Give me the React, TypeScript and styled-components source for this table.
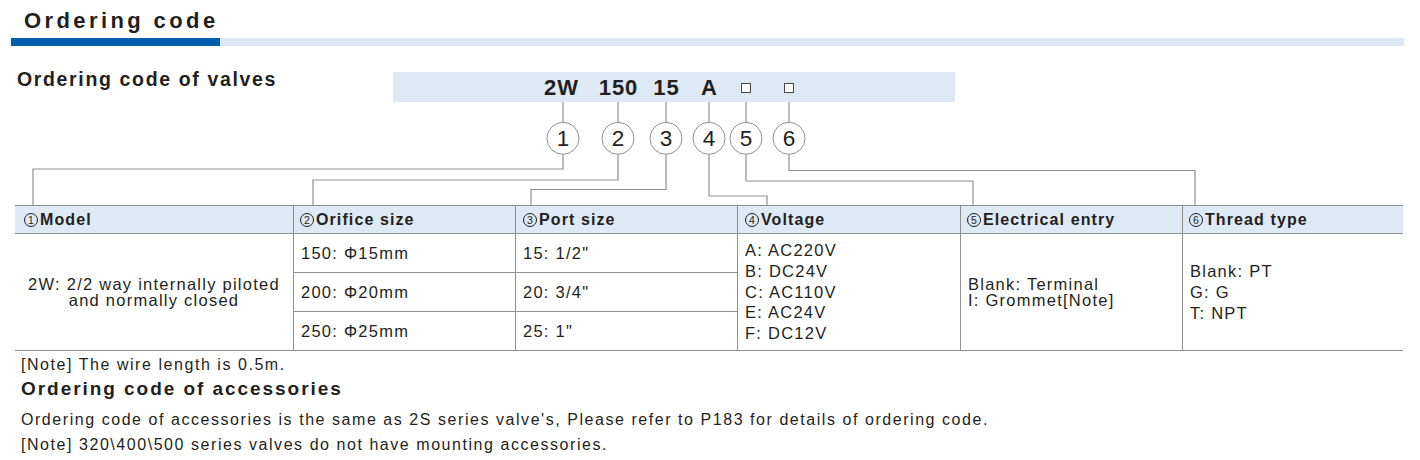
import React from "react";
import styled, { createGlobalStyle } from "styled-components";

const GlobalStyle = createGlobalStyle`
  html, body { margin: 0; padding: 0; background: #ffffff; }
  body {
    font-family: "Liberation Sans", Arial, "DejaVu Sans", sans-serif;
    color: #231f20;
  }
`;

const INK = "#231f20";
const LINE = "#8f8f8f";
const PALE = "#dfe9f4";
const BLUE = "#005dae";

const Page = styled.div`
  width: 1420px;
  height: 460px;
  overflow: hidden;
`;

const TitleText = styled.h1`
  margin: 0;
  padding: 11px 0 0 24px;
  font-size: 22px;
  line-height: 20px;
  font-weight: 700;
  letter-spacing: 3.4px;
`;

const TitleBar = styled.div`
  margin: 7px 0 0 11px;
  width: 1393px;
  height: 8px;
  background: linear-gradient(to right, ${BLUE} 0 209px, ${PALE} 209px 100%);
`;

const CodeRow = styled.div`
  display: flex;
  align-items: flex-start;
  margin-top: 23px;
`;

const SubHeading = styled.h2`
  margin: 0;
  width: 376px;
  padding-left: 17px;
  font-size: 19.5px;
  line-height: 20px;
  font-weight: 700;
  letter-spacing: 1.65px;
`;

const CodeBox = styled.div`
  margin-top: 3px;
  width: 562px;
  height: 30px;
  padding: 2px 0 0 140px;
  box-sizing: border-box;
  background: ${PALE};
  display: grid;
  grid-template-columns: 56px 58px 38px 48px 26px 60px;
  align-items: center;
`;

const Token = styled.span`
  justify-self: center;
  font-size: 22px;
  line-height: 28px;
  font-weight: 700;
  letter-spacing: 1px;
  margin-right: -1px;
`;

const Blank = styled.span`
  justify-self: center;
  width: 8px;
  height: 8px;
  border: 1px solid #4a4a4a;
  background: #fff;
`;

const Diagram = styled.svg`
  display: block;
  width: 1420px;
  height: 103px;
`;

const Table = styled.div`
  margin-left: 15px;
  width: 1388px;
  border-top: 1px solid ${LINE};
  display: grid;
  grid-template-columns: 279px 222px 222px 223px 222px 220px;
  grid-template-rows: 28px 39px 39px 39px;
`;

const HeadCell = styled.div<{ $pad: number; $last?: boolean }>`
  box-sizing: border-box;
  background: ${PALE};
  border-bottom: 1px solid ${LINE};
  border-right: ${(p) => (p.$last ? "none" : `1px solid ${LINE}`)};
  padding-left: ${(p) => p.$pad}px;
  display: flex;
  align-items: center;
  font-size: 16px;
  font-weight: 700;
  letter-spacing: 1.1px;
  white-space: nowrap;
`;

const Num = styled.span`
  display: inline-flex;
  align-items: center;
  justify-content: center;
  box-sizing: border-box;
  width: 14px;
  height: 14px;
  margin: 1px 2px 0 0;
  border: 1px solid ${INK};
  border-radius: 50%;
  font-size: 10.5px;
  line-height: 1;
  font-weight: 400;
  letter-spacing: 0;
`;

const Cell = styled.div<{ $span?: boolean; $last?: boolean; $center?: boolean; $lh?: number }>`
  box-sizing: border-box;
  grid-row: ${(p) => (p.$span ? "2 / span 3" : "auto")};
  border-bottom: 1px solid ${LINE};
  border-right: ${(p) => (p.$last ? "none" : `1px solid ${LINE}`)};
  padding-left: ${(p) => (p.$center ? 0 : 7)}px;
  display: flex;
  flex-direction: column;
  justify-content: center;
  align-items: ${(p) => (p.$center ? "center" : "flex-start")};
  text-align: ${(p) => (p.$center ? "center" : "left")};
  font-size: 16.5px;
  line-height: ${(p) => p.$lh ?? 18}px;
  letter-spacing: 1.25px;
  white-space: nowrap;
`;

const Notes = styled.div`
  padding-left: 21px;
`;

const NoteLine = styled.p<{ $lh: number; $mt?: number }>`
  margin: ${(p) => p.$mt ?? 0}px 0 0 0;
  font-size: 16px;
  line-height: ${(p) => p.$lh}px;
  letter-spacing: 1.55px;
  white-space: nowrap;
`;

const NoteHeading = styled.h3`
  margin: 0;
  font-size: 19px;
  line-height: 19px;
  font-weight: 700;
  letter-spacing: 1.95px;
`;

const connectors = [
  { n: "1", x: 563, y: 67, tx: 33 },
  { n: "2", x: 618, y: 78, tx: 313 },
  { n: "3", x: 666, y: 87.5, tx: 531 },
  { n: "4", x: 709, y: 94, tx: 767 },
  { n: "5", x: 746, y: 79, tx: 973 },
  { n: "6", x: 789, y: 68.5, tx: 1195 },
];

export default function App() {
  return (
    <Page>
      <GlobalStyle />
      <TitleText>Ordering code</TitleText>
      <TitleBar />
      <CodeRow>
        <SubHeading>Ordering code of valves</SubHeading>
        <CodeBox>
          <Token>2W</Token>
          <Token>150</Token>
          <Token>15</Token>
          <Token>A</Token>
          <Blank />
          <Blank />
        </CodeBox>
      </CodeRow>
      <Diagram viewBox="0 0 1420 103">
        {connectors.map((c) => (
          <g key={c.n} fill="none" stroke={LINE} strokeWidth={1.2}>
            <line x1={c.x} y1={0} x2={c.x} y2={20.3} />
            <polyline points={`${c.x},52.3 ${c.x},${c.y} ${c.tx},${c.y} ${c.tx},103`} />
            <circle cx={c.x} cy={36.3} r={16} fill="#fff" strokeWidth={1} />
            <text
              x={c.x}
              y={44.3}
              textAnchor="middle"
              fill={INK}
              stroke="none"
              fontSize={22.5}
              fontFamily="Liberation Sans, Arial, sans-serif"
            >
              {c.n}
            </text>
          </g>
        ))}
      </Diagram>
      <Table>
        <HeadCell $pad={9}><Num>1</Num>Model</HeadCell>
        <HeadCell $pad={6}><Num>2</Num>Orifice size</HeadCell>
        <HeadCell $pad={7}><Num>3</Num>Port size</HeadCell>
        <HeadCell $pad={7}><Num>4</Num>Voltage</HeadCell>
        <HeadCell $pad={6}><Num>5</Num>Electrical entry</HeadCell>
        <HeadCell $pad={6} $last><Num>6</Num>Thread type</HeadCell>

        <Cell $span $center $lh={16}>
          <span>2W: 2/2 way internally piloted</span>
          <span>and normally closed</span>
        </Cell>
        <Cell>150: Φ15mm</Cell>
        <Cell>15: 1/2"</Cell>
        <Cell $span $lh={20.7}>
          <span>A: AC220V</span>
          <span>B: DC24V</span>
          <span>C: AC110V</span>
          <span>E: AC24V</span>
          <span>F: DC12V</span>
        </Cell>
        <Cell $span $lh={16}>
          <span>Blank: Terminal</span>
          <span>I: Grommet[Note]</span>
        </Cell>
        <Cell $span $last $lh={21}>
          <span>Blank: PT</span>
          <span>G: G</span>
          <span>T: NPT</span>
        </Cell>
        <Cell style={{ gridColumn: 2, gridRow: 3 }}>200: Φ20mm</Cell>
        <Cell style={{ gridColumn: 3, gridRow: 3 }}>20: 3/4"</Cell>
        <Cell style={{ gridColumn: 2, gridRow: 4 }}>250: Φ25mm</Cell>
        <Cell style={{ gridColumn: 3, gridRow: 4 }}>25: 1"</Cell>
      </Table>
      <Notes>
        <NoteLine $lh={28}>[Note] The wire length is 0.5m.</NoteLine>
        <NoteHeading>Ordering code of accessories</NoteHeading>
        <NoteLine $lh={25.7} $mt={8.6}>
          Ordering code of accessories is the same as 2S series valve's, Please refer to P183 for details of ordering code.
        </NoteLine>
        <NoteLine $lh={25.7}>[Note] 320\400\500 series valves do not have mounting accessories.</NoteLine>
      </Notes>
    </Page>
  );
}
